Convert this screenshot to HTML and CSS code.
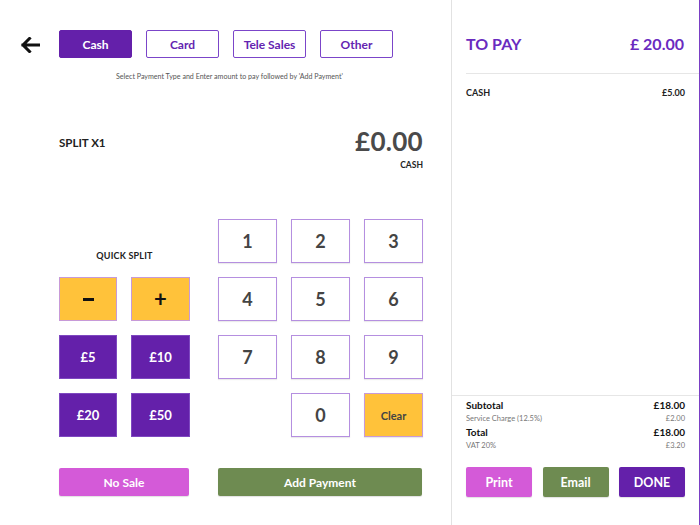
FILE: index.html
```html
<!DOCTYPE html>
<html lang="en">
<head>
<meta charset="utf-8">
<title>Payment</title>
<link rel="stylesheet" href="styles.css">
</head>
<body>
<div class="screen">
  <main class="main">
    <div class="header">
      <button class="back" aria-label="Back">
        <svg width="20" height="16" viewBox="0 0 20 16"><path d="M18.5 8H3M9.5 1.5L3 8l6.5 6.5" fill="none" stroke="#111" stroke-width="3" stroke-linecap="square"/></svg>
      </button>
      <div class="tabs">
        <button class="tab active">Cash</button>
        <button class="tab">Card</button>
        <button class="tab">Tele Sales</button>
        <button class="tab">Other</button>
      </div>
    </div>
    <p class="hint">Select Payment Type and Enter amount to pay followed by 'Add Payment'</p>

    <div class="display">
      <div class="split">SPLIT X1</div>
      <div class="amount">£0.00</div>
    </div>
    <div class="method">CASH</div>

    <div class="pad-area">
      <div class="quick">
        <div class="quick-label">QUICK SPLIT</div>
        <button class="qbtn yellow sym" aria-label="Minus"><span class="minus"></span></button>
        <button class="qbtn yellow sym">+</button>
        <button class="qbtn purple">£5</button>
        <button class="qbtn purple">£10</button>
        <button class="qbtn purple">£20</button>
        <button class="qbtn purple">£50</button>
      </div>
      <div class="keypad">
        <button class="key">1</button>
        <button class="key">2</button>
        <button class="key">3</button>
        <button class="key">4</button>
        <button class="key">5</button>
        <button class="key">6</button>
        <button class="key">7</button>
        <button class="key">8</button>
        <button class="key">9</button>
        <span class="key-empty"></span>
        <button class="key">0</button>
        <button class="key clear">Clear</button>
      </div>
    </div>

    <div class="actions">
      <button class="action pink nosale">No Sale</button>
      <button class="action green addpay">Add Payment</button>
    </div>
  </main>

  <aside class="side">
    <div class="side-top">
      <div class="topay">
        <span>TO PAY</span>
        <span>£ 20.00</span>
      </div>
    </div>
    <div class="pay-row">
      <span>CASH</span>
      <span>£5.00</span>
    </div>

    <div class="side-bottom">
      <div class="sum-row strong"><span>Subtotal</span><span>£18.00</span></div>
      <div class="sum-row small"><span>Service Charge (12.5%)</span><span>£2.00</span></div>
      <div class="sum-row strong"><span>Total</span><span>£18.00</span></div>
      <div class="sum-row small"><span>VAT 20%</span><span>£3.20</span></div>
      <div class="side-buttons">
        <button class="sbtn pink">Print</button>
        <button class="sbtn green">Email</button>
        <button class="sbtn purple">DONE</button>
      </div>
    </div>
  </aside>
</div>
</body>
</html>
```

FILE: styles.css
```css
* { box-sizing: border-box; }
html, body { margin: 0; padding: 0; }
body {
  font-family: "Lato", "Noto Sans", sans-serif;
  background: #fff;
  color: #222;
}
button {
  font-family: inherit;
  cursor: pointer;
  padding: 0;
  margin: 0;
}
.screen {
  display: flex;
  width: 700px;
  height: 525px;
}
.main {
  width: 451px;
  padding: 30px 0 0 59px;
}
.header {
  display: flex;
  align-items: center;
  height: 28px;
  margin-left: -59px;
}
.back {
  width: 59px;
  height: 28px;
  border: 0;
  background: none;
  display: flex;
  align-items: center;
  justify-content: center;
  padding-top: 2px;
}
.tabs {
  display: flex;
  gap: 14px;
}
.tab {
  width: 73px;
  height: 28px;
  border: 1.5px solid #7b45c9;
  border-radius: 2px;
  background: #fff;
  color: #6424b0;
  font-size: 12px;
  font-weight: 700;
}
.tab.active {
  background: #6420aa;
  border-color: #6420aa;
  color: #fff;
}
.hint {
  margin: 14px 0 0 -59px;
  width: 459px;
  text-align: center;
  font-size: 7.1px;
  line-height: 10px;
  color: #555;
}
.display {
  display: flex;
  justify-content: space-between;
  align-items: center;
  width: 364px;
  margin-top: 44px;
  height: 30px;
}
.split {
  font-size: 11.5px;
  font-weight: 700;
  color: #222;
  padding-top: 2px;
}
.amount {
  font-size: 26px;
  line-height: 30px;
  font-weight: 700;
  color: #4a4a4a;
  letter-spacing: 0.3px;
}
.method {
  width: 364px;
  margin-top: 4px;
  text-align: right;
  font-size: 8.5px;
  line-height: 10px;
  font-weight: 700;
  color: #222;
}
.pad-area {
  display: flex;
  gap: 28px;
  margin-top: 49px;
}
.quick {
  display: grid;
  grid-template-columns: 58px 59px;
  grid-auto-rows: 44px;
  column-gap: 14px;
  row-gap: 14px;
}
.quick-label {
  grid-column: 1 / 3;
  align-self: end;
  text-align: center;
  font-size: 9px;
  font-weight: 700;
  color: #222;
  line-height: 10px;
  margin-bottom: 2px;
  letter-spacing: 0.2px;
}
.qbtn {
  border: 1px solid #c79ad8;
  font-weight: 700;
  font-size: 13px;
}
.qbtn.yellow {
  background: #ffc23a;
  color: #111;
}
.qbtn.sym {
  font-size: 22px;
  line-height: 1;
  display: flex;
  align-items: center;
  justify-content: center;
}
.minus {
  display: block;
  width: 11px;
  height: 3px;
  background: #111;
}
.qbtn.purple {
  background: #6420aa;
  border-color: #7e48c0;
  color: #fff;
}
.keypad {
  display: grid;
  grid-template-columns: repeat(3, 59px);
  grid-auto-rows: 44px;
  gap: 14px;
}
.key {
  background: #fff;
  border: 1px solid #b58fe0;
  box-shadow: 0 1px 1px rgba(0,0,0,0.08);
  color: #444;
  font-size: 18px;
  font-weight: 700;
}
.key.clear {
  background: #ffc23a;
  border-color: #c79ad8;
  font-size: 11px;
  color: #444;
}
.actions {
  display: flex;
  gap: 29px;
  margin-top: 31px;
}
.action {
  height: 28px;
  border: 0;
  border-radius: 2px;
  color: #fff;
  font-size: 12px;
  font-weight: 700;
  box-shadow: 0 1px 1px rgba(0,0,0,0.12);
}
.nosale { width: 130px; }
.addpay { width: 204px; }
.pink { background: #d45ad8; }
.green { background: #6e8b51; }
.purple { background: #6420aa; }

.side {
  flex: 1;
  display: flex;
  flex-direction: column;
  border-left: 1px solid #e2e2e2;
  border-right: 2px solid #7a3fc4;
}
.side-top {
  padding: 34px 0 0 14px;
}
.topay {
  display: flex;
  justify-content: space-between;
  padding: 0 15px 19px 0;
  border-bottom: 1px solid #e6e6e6;
  font-size: 16px;
  line-height: 20px;
  font-weight: 700;
  color: #6a2bbf;
}
.pay-row {
  display: flex;
  justify-content: space-between;
  margin-top: 13px;
  padding: 0 14px 0 14px;
  font-size: 9px;
  line-height: 12px;
  font-weight: 700;
  color: #222;
}
.side-bottom {
  margin-top: auto;
  border-top: 1px solid #e6e6e6;
  padding: 2px 14px 28px 14px;
}
.sum-row {
  display: flex;
  justify-content: space-between;
}
.sum-row.strong {
  font-size: 10px;
  line-height: 14px;
  font-weight: 700;
  color: #111;
}
.sum-row.small {
  font-size: 7.5px;
  line-height: 13px;
  color: #777;
}
.side-buttons {
  display: flex;
  gap: 10.5px;
  margin-top: 15px;
}
.sbtn {
  width: 66px;
  height: 30px;
  border: 0;
  border-radius: 2px;
  color: #fff;
  font-size: 12.5px;
  font-weight: 700;
  box-shadow: 0 1px 1px rgba(0,0,0,0.12);
}
```
